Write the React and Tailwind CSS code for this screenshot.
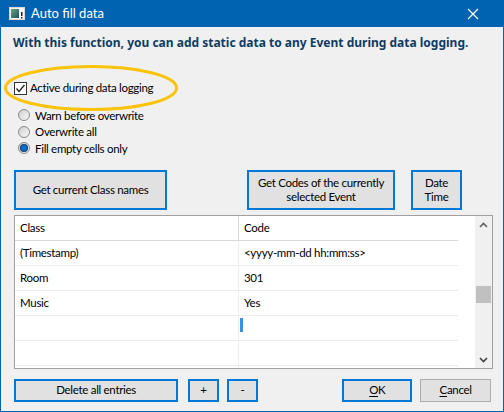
export default function App() {
  const rows = [
    ["(Timestamp)", "<yyyy-mm-dd hh:mm:ss>"],
    ["Room", "301"],
    ["Music", "Yes"],
    ["", ""],
    ["", ""],
    ["", ""],
  ];
  return (
    <div className="w-[504px] h-[412px] bg-[#0063b1] px-px pb-px flex flex-col font-['Lato',sans-serif] text-[11.5px] tracking-[-0.3px] text-[#000000] leading-none overflow-hidden">
      {/* title bar */}
      <div className="h-[27px] flex items-center text-white shrink-0">
        <svg className="ml-[8px] w-[16px] h-[13px]" viewBox="0 0 16 13">
          <defs>
            <linearGradient id="ico" x1="0" y1="0" x2="1" y2="1">
              <stop offset="0" stopColor="#6aa67c" />
              <stop offset="1" stopColor="#1f4f6a" />
            </linearGradient>
          </defs>
          <rect x="0" y="0" width="16" height="13" fill="#d8d8d8" />
          <rect x="1" y="1" width="14" height="11" fill="#f4f4f4" />
          <rect x="2" y="2" width="8" height="9" fill="url(#ico)" />
          <rect x="12" y="5" width="1.5" height="4" fill="#202020" />
          <rect x="12" y="10" width="1.5" height="1.5" fill="#202020" />
        </svg>
        <span className="ml-[6px] text-[13px] tracking-normal">Auto fill data</span>
        <svg className="ml-auto mr-[24px] w-[12px] h-[12px]" viewBox="0 0 12 12">
          <path d="M1 1L11 11M11 1L1 11" stroke="white" strokeWidth="1.2" />
        </svg>
      </div>

      {/* body */}
      <div className="flex-1 bg-[#f0f0f0] relative flex flex-col px-[12px]">
        <div className="mt-[8px] h-[16px] flex items-center font-bold text-[12px] tracking-normal text-[#0e3c64] font-['Noto_Sans',sans-serif] whitespace-nowrap">
          With this function, you can add static data to any Event during data logging.
        </div>

        {/* highlight ellipse */}
        <svg className="absolute left-[2px] top-[37px] w-[176px] h-[48px]" viewBox="0 0 176 48">
          <ellipse cx="88" cy="24" rx="85.5" ry="21.5" fill="none" stroke="#fcc30c" strokeWidth="3" />
        </svg>

        <div className="mt-[29px] h-[16px] flex items-center">
          <span className="w-[13px] h-[13px] ml-px border border-[#333333] bg-white flex items-center justify-center">
            <svg viewBox="0 0 11 11" className="w-[11px] h-[11px]">
              <path d="M1.5 5.5L4 8.5L9.5 2" fill="none" stroke="#222222" strokeWidth="1.3" />
            </svg>
          </span>
          <span className="ml-[3px]">Active during data logging</span>
        </div>

        <div className="mt-[11px] flex flex-col">
          {["Warn before overwrite", "Overwrite all", "Fill empty cells only"].map((t, i) => (
            <div key={t} className="h-[16.5px] flex items-center">
              <span className="ml-[5px] w-[12px] h-[12px] rounded-full border border-[#8a8a8a] bg-gradient-to-br from-[#d0d0d0] to-[#f8f8f8] flex items-center justify-center">
                {i === 2 && <span className="w-[6px] h-[6px] rounded-full bg-[#0a6fc8] ring-1 ring-[#0b3f6e]" />}
              </span>
              <span className="ml-[5px]">{t}</span>
            </div>
          ))}
        </div>

        {/* top buttons */}
        <div className="mt-[13px] h-[40px] flex items-stretch">
          <button className="ml-px w-[153px] border-2 border-[#0078d7] bg-[#e1e1e1] whitespace-nowrap">Get current Class names</button>
          <button className="ml-[80px] w-[148px] border-2 border-[#0078d7] bg-[#e1e1e1] leading-[14px] whitespace-nowrap">
            Get Codes of the currently
            <br />
            selected Event
          </button>
          <button className="ml-[16px] w-[51px] border-2 border-[#0078d7] bg-[#e1e1e1] leading-[14px]">
            Date
            <br />
            Time
          </button>
        </div>

        {/* table */}
        <div className="mt-[5px] ml-px h-[154px] w-[479px] border border-[#a0a0a0] bg-white flex overflow-hidden">
          <div className="w-[443px] flex flex-col">
            <div className="h-[25px] shrink-0 flex border-b border-[#d8d8d8]">
              <div className="w-[224px] pl-[5px] pt-px flex items-center border-r border-[#d8d8d8]">Class</div>
              <div className="flex-1 pl-[5px] pt-px flex items-center">Code</div>
            </div>
            {rows.map((r, i) => (
              <div key={i} className="h-[25px] shrink-0 flex border-b border-[#ececec]">
                <div className="w-[224px] pl-[5px] pt-px flex items-center border-r border-[#ececec]">{r[0]}</div>
                <div className="flex-1 pl-[5px] pt-px flex items-center relative">
                  {r[1]}
                  {i === 3 && <span className="absolute left-[1px] top-[2px] w-[3px] h-[14px] bg-[#3b8fe6]" />}
                </div>
              </div>
            ))}
          </div>
          <div className="flex-1" />
          <div className="w-[17px] bg-[#f0f0f0] flex flex-col items-center">
            <svg className="mt-[6px] w-[9px] h-[6px]" viewBox="0 0 9 6">
              <path d="M1 5L4.5 1.5L8 5" fill="none" stroke="#606060" strokeWidth="1.6" />
            </svg>
            <div className="mt-[58px] w-[15px] h-[17px] bg-[#c0c0c0]" />
            <div className="flex-1" />
            <svg className="mb-[5px] w-[9px] h-[6px]" viewBox="0 0 9 6">
              <path d="M1 1L4.5 4.5L8 1" fill="none" stroke="#404040" strokeWidth="1.6" />
            </svg>
          </div>
        </div>

        {/* bottom buttons */}
        <div className="mt-[10px] h-[23px] flex items-stretch">
          <button className="ml-px w-[167px] border-2 border-[#0078d7] bg-[#e1e1e1]">Delete all entries</button>
          <button className="ml-[10px] w-[31px] border-2 border-[#0078d7] bg-[#e1e1e1]">+</button>
          <button className="ml-[8px] w-[32px] border-2 border-[#0078d7] bg-[#e1e1e1]">-</button>
          <button className="ml-[84px] w-[71px] border-2 border-[#0078d7] bg-[#e1e1e1]">
            <span className="underline underline-offset-2">O</span>K
          </button>
          <button className="ml-[8px] w-[72px] border border-[#adadad] bg-[#e1e1e1]">
            <span className="underline underline-offset-2">C</span>ancel
          </button>
        </div>
      </div>
    </div>
  );
}
